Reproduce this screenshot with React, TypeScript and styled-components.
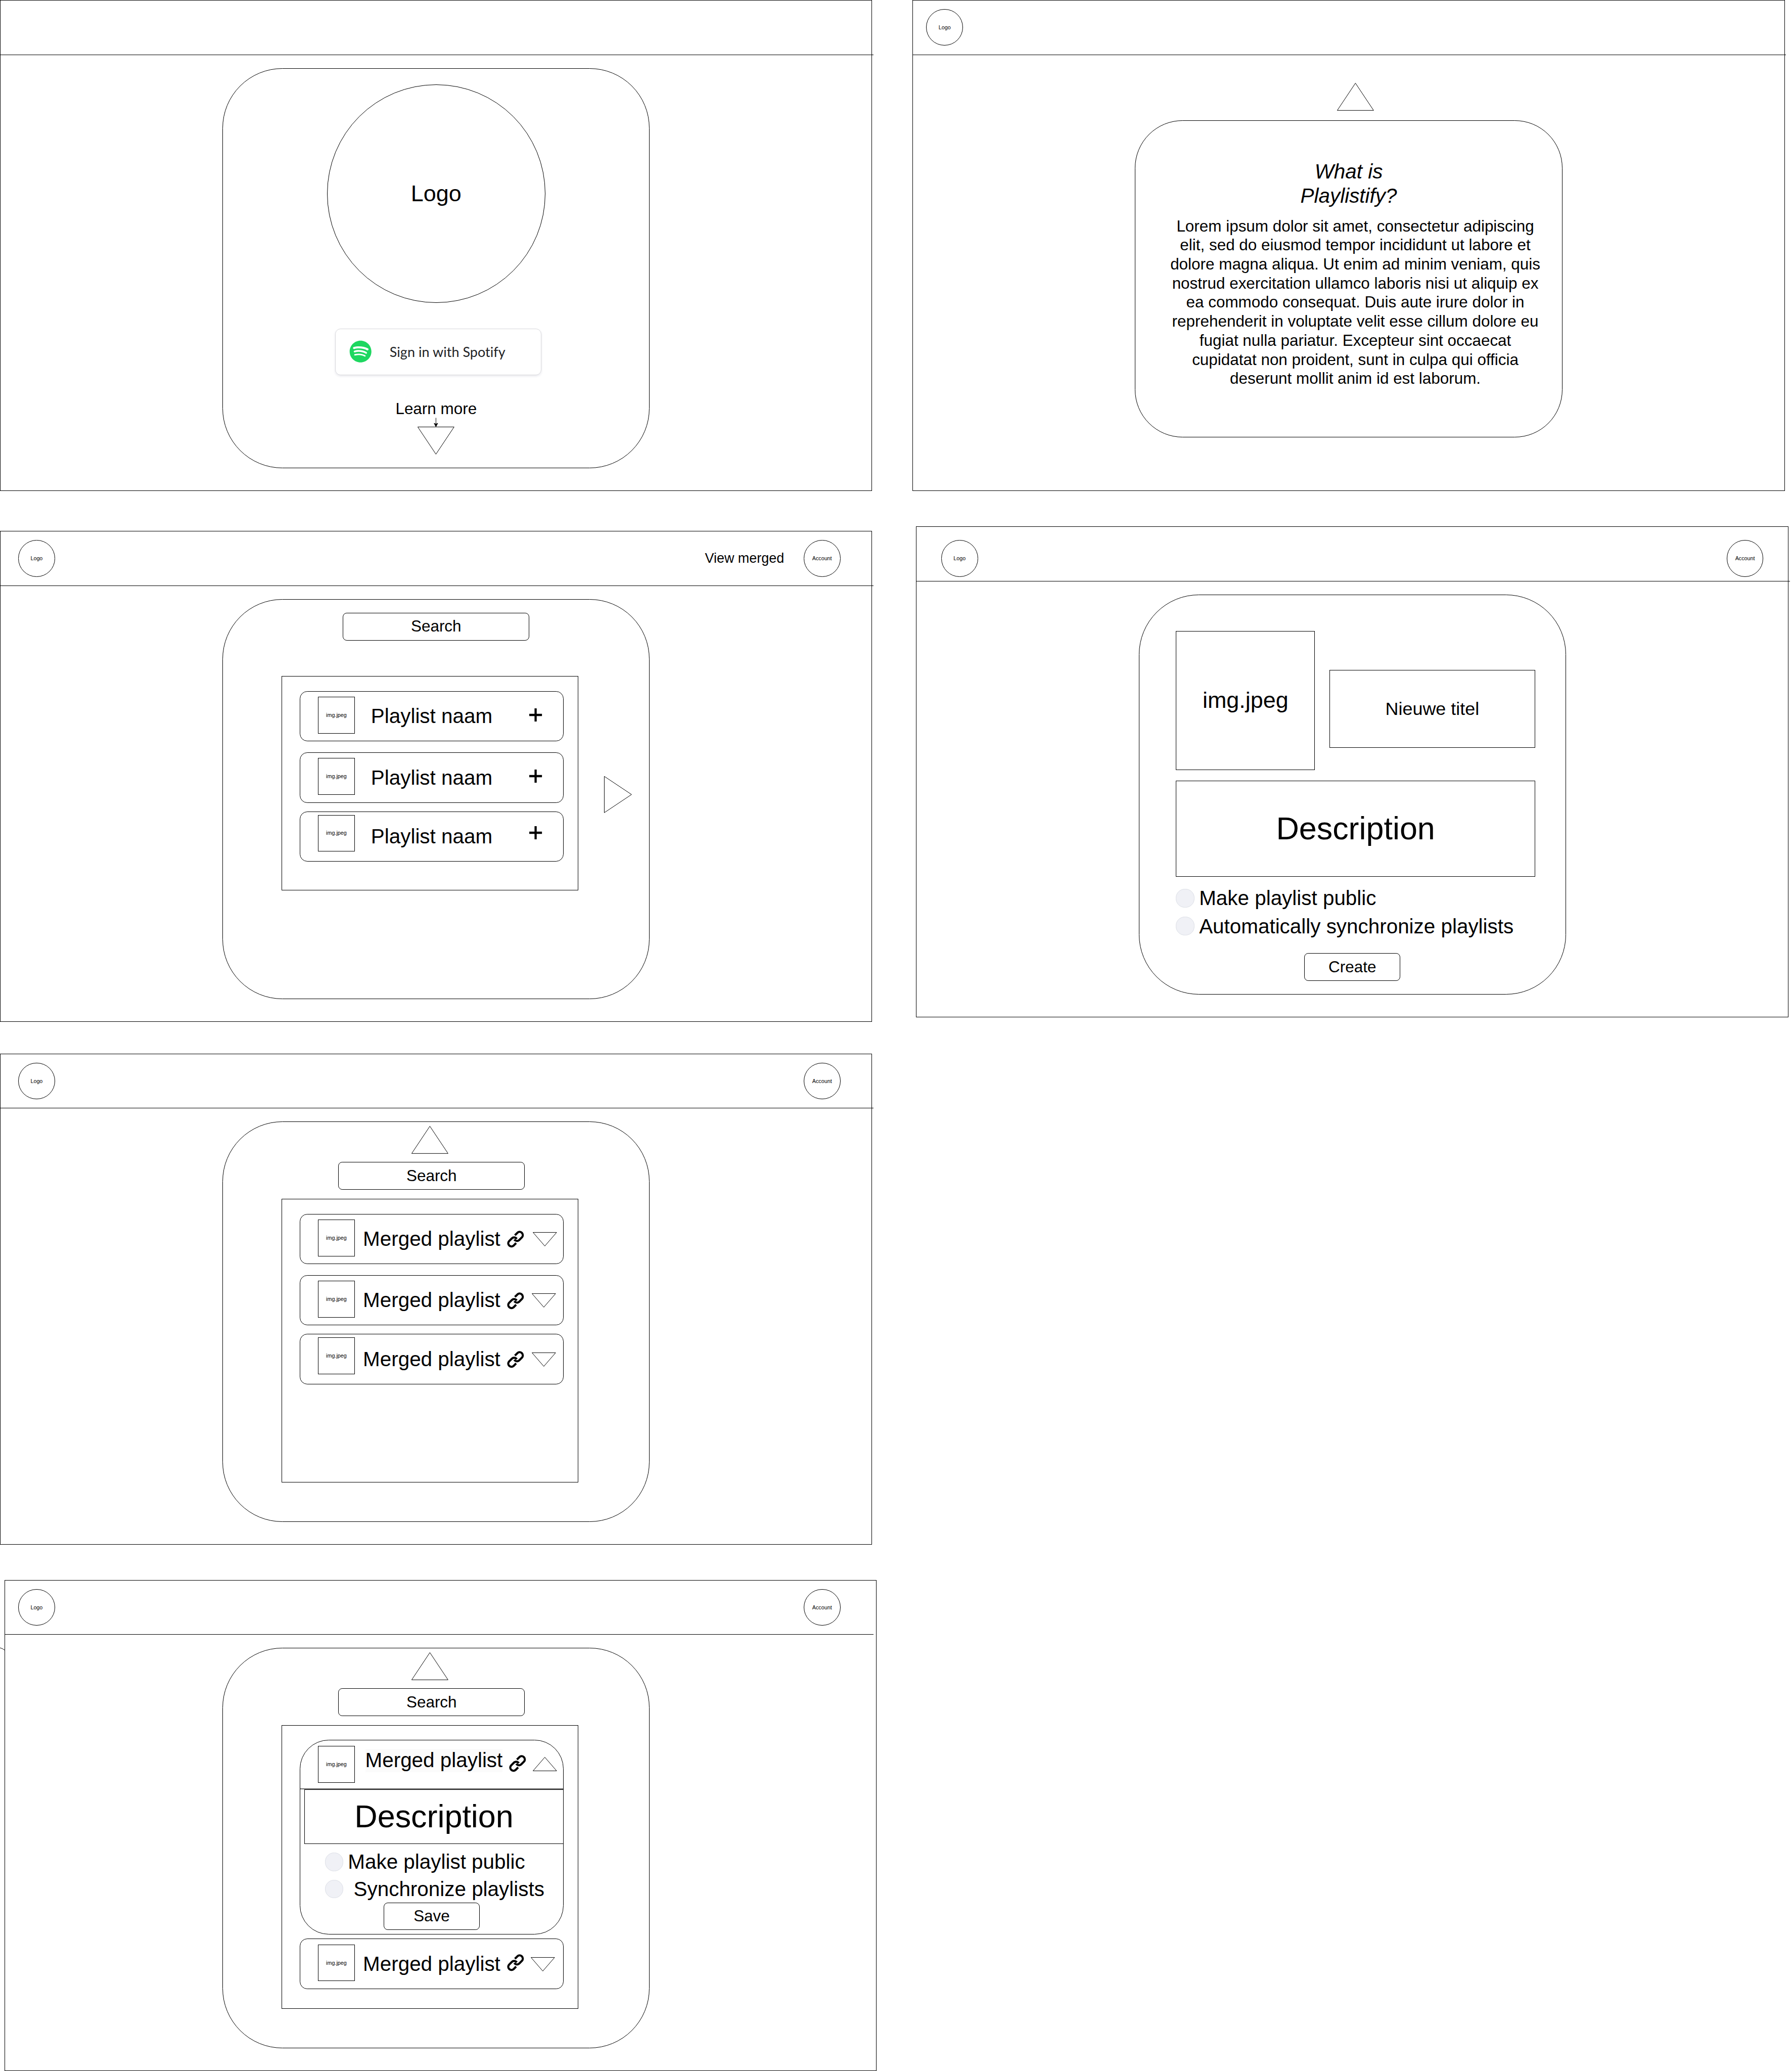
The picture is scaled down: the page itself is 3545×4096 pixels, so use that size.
import React from "react";
import styled, { createGlobalStyle } from "styled-components";
import { FaSpotify } from "react-icons/fa";

/* One rem is ten drawing units, so every length below is written in units. */
const u = (n: number) => `${n / 10}rem`;

const GlobalStyle = createGlobalStyle`
  *, *::before, *::after { box-sizing: border-box; }
  html { font-size: 8.9815px; background: #fff; overflow: hidden; }
  body {
    margin: 0;
    color: #000;
    font-family: "Liberation Sans", Arial, Helvetica, sans-serif;
    line-height: 1.2;
    overflow: hidden;
  }
  h2, p { margin: 0; font-weight: 400; }
`;

const Board = styled.main`
  display: flex;
  align-items: flex-start;
  gap: ${u(89)};
  width: 3545px;
  height: 4096px;
  overflow: hidden;
  background: #fff;
`;

const Column = styled.div`
  display: flex;
  flex-direction: column;
  flex: none;
  width: ${u(1921)};
`;

const line = "1px solid #000";

const Frame = styled.section<{ $top?: number; $left?: number }>`
  display: flex;
  flex-direction: column;
  align-items: flex-start;
  flex: none;
  width: ${u(1921)};
  height: ${u(1081)};
  margin-top: ${(p) => u(p.$top ?? 0)};
  margin-left: ${(p) => u(p.$left ?? 0)};
  border: ${line};
`;

const TopBar = styled.header<{ $width?: number; $pad?: number; $drop?: number }>`
  display: flex;
  align-items: flex-start;
  flex: none;
  width: ${(p) => u(p.$width ?? 1923)};
  height: ${u(120)};
  padding: ${(p) => u(p.$drop ?? 19)} 0 0 ${(p) => u(p.$pad ?? 39)};
  border-bottom: ${line};
`;

const Circle = styled.div<{ $size: number; $font: number; $top?: number; $left?: number }>`
  display: flex;
  align-items: center;
  justify-content: center;
  flex: none;
  width: ${(p) => u(p.$size)};
  height: ${(p) => u(p.$size)};
  margin-top: ${(p) => u(p.$top ?? 0)};
  margin-left: ${(p) => u(p.$left ?? 0)};
  border: ${line};
  border-radius: 50%;
  font-size: ${(p) => u(p.$font)};
`;

const NavLink = styled.span`
  display: flex;
  align-items: center;
  height: ${u(81)};
  margin-left: ${u(1431.5)};
  margin-right: ${u(42.5)};
  font-size: ${u(30)};
  line-height: 1.2;
  white-space: nowrap;
  width: ${u(175)};
`;

const Panel = styled.div<{ $left?: number; $top?: number; $height?: number; $radius?: number; $start?: boolean }>`
  display: flex;
  flex-direction: column;
  align-items: ${(p) => (p.$start ? "flex-start" : "center")};
  flex: none;
  width: ${u(941)};
  height: ${(p) => u(p.$height ?? 881)};
  margin-top: ${(p) => u(p.$top ?? 29)};
  margin-left: ${(p) => u(p.$left ?? 489)};
  border: ${line};
  border-radius: ${(p) => u(p.$radius ?? 132)};
`;

const SpotifyButton = styled.div`
  display: flex;
  align-items: center;
  width: ${u(454)};
  height: ${u(101.5)};
  margin-top: ${u(57)};
  margin-left: ${u(9)};
  padding-left: ${u(30.5)};
  border: 1px solid #d8d8dc;
  border-radius: ${u(12)};
  box-shadow: 0 2px 4px rgba(60, 60, 100, 0.12);
  color: #202124;
  font-family: Lato, "Open Sans", sans-serif;
  font-size: ${u(30)};
  letter-spacing: ${u(0.06)};
  white-space: nowrap;
  svg {
    flex: none;
    width: ${u(49.5)};
    height: ${u(49.5)};
    margin: 0 ${u(39)} ${u(1)} 0;
    color: #1ed760;
  }
`;

const LearnMore = styled.span`
  margin-top: ${u(53.5)};
  font-size: ${u(35)};
`;

const Shape = styled.svg<{ $w: number; $h: number; $top?: number; $left?: number; $right?: number }>`
  display: block;
  flex: none;
  width: ${(p) => u(p.$w)};
  height: ${(p) => u(p.$h)};
  margin-top: ${(p) => u(p.$top ?? 0)};
  margin-left: ${(p) => u(p.$left ?? 0)};
  margin-right: ${(p) => u(p.$right ?? 0)};
  overflow: visible;
  fill: none;
  stroke: #000;
  stroke-width: 1.1;
`;

const Heading = styled.h2`
  margin-top: ${u(84.3)};
  font-size: ${u(45)};
  font-style: italic;
  text-align: center;
  white-space: pre-line;
`;

const Copy = styled.p`
  margin-top: ${u(18.7)};
  padding-left: ${u(29)};
  font-size: ${u(35)};
  text-align: center;
  white-space: pre;
`;

const Button = styled.div<{ $width: number; $top: number; $right?: number }>`
  display: flex;
  align-items: center;
  justify-content: center;
  align-self: center;
  flex: none;
  width: ${(p) => u(p.$width)};
  height: ${u(61)};
  margin-top: ${(p) => u(p.$top)};
  margin-right: ${(p) => u(p.$right ?? 0)};
  border: ${line};
  font-size: ${u(35)};
  border-radius: ${u(9)};
`;

const ListRow = styled.div<{ $top: number }>`
  display: flex;
  align-items: flex-start;
  align-self: stretch;
  margin-top: ${(p) => u(p.$top)};
  padding-left: ${u(129)};
`;

const List = styled.div<{ $height: number }>`
  display: flex;
  flex-direction: column;
  flex: none;
  width: ${u(654)};
  height: ${(p) => u(p.$height)};
  padding: ${u(31.5)} 0 0 ${u(39)};
  border: ${line};
`;

const Card = styled.div<{ $height?: number; $radius?: number; $top?: number }>`
  display: flex;
  flex-direction: column;
  flex: none;
  width: ${u(581)};
  height: ${(p) => u(p.$height ?? 111)};
  margin-top: ${(p) => u(p.$top ?? 0)};
  border: ${line};
  border-radius: ${(p) => u(p.$radius ?? 16.5)};
`;

const CardRow = styled.div<{ $shift?: number; $height?: number }>`
  display: grid;
  grid-template-columns: 1fr auto 1fr;
  align-items: start;
  flex: none;
  height: ${(p) => u(p.$height ?? 109)};
  padding-left: ${(p) => u(p.$shift ?? 0)};
`;

const Thumb = styled.div<{ $left?: number; $top?: number }>`
  display: flex;
  align-items: center;
  justify-content: center;
  width: ${u(81)};
  height: ${u(81)};
  margin-top: ${(p) => u(p.$top ?? 11.5)};
  margin-left: ${(p) => u(p.$left ?? 39)};
  border: ${line};
  font-size: ${u(12)};
`;

const Title = styled.span<{ $raise?: number; $tint?: boolean }>`
  align-self: center;
  margin-bottom: ${(p) => u(p.$raise ?? 0)};
  font-size: ${u(45)};
  line-height: ${(p) => (p.$tint ? u(51) : 1.2)};
  white-space: nowrap;
  background: ${(p) => (p.$tint ? "#fbfbfb" : "transparent")};
`;

const Actions = styled.div<{ $end?: boolean }>`
  display: flex;
  align-items: flex-start;
  justify-content: ${(p) => (p.$end ? "flex-end" : "space-between")};
`;

const Separator = styled.div`
  flex: none;
  height: ${u(2)};
  background: #6a6a6a;
`;

const Field = styled.div<{ $w: number; $h: number; $font: number; $top?: number; $left?: number }>`
  display: flex;
  align-items: center;
  justify-content: center;
  flex: none;
  width: ${(p) => u(p.$w)};
  height: ${(p) => u(p.$h)};
  margin-top: ${(p) => u(p.$top ?? 0)};
  margin-left: ${(p) => u(p.$left ?? 0)};
  border: ${line};
  font-size: ${(p) => u(p.$font)};
`;

const FieldRow = styled.div`
  display: flex;
  align-items: flex-start;
  margin: ${u(79)} 0 0 ${u(81)};
`;

const Option = styled.div<{ $top: number; $left: number; $gap?: number }>`
  display: flex;
  align-items: center;
  gap: ${(p) => u(p.$gap ?? 10)};
  flex: none;
  height: ${u(41)};
  margin-top: ${(p) => u(p.$top)};
  margin-left: ${(p) => u(p.$left)};
  font-size: ${u(45)};
  white-space: nowrap;
`;

const Box = styled.i`
  flex: none;
  width: ${u(41)};
  height: ${u(41)};
  border: 1px solid #dcdfe6;
  background: #f0f1f6;
  border-radius: 48%;
`;

const StrayLine = styled(Shape)`
  position: absolute;
  top: ${u(3629)};
  left: 0;
`;

type TriangleProps = {
  dir: "up" | "down" | "right";
  small?: boolean;
  top?: number;
  left?: number;
  right?: number;
};

const Triangle = ({ dir, small, top, left, right }: TriangleProps) => {
  const w = small ? 53 : dir === "right" ? 61 : 81;
  const h = small ? 31 : dir === "right" ? 81 : 61;
  const r = w - 0.5;
  const b = h - 0.5;
  const points = {
    up: `${w / 2},0.5 ${r},${b} 0.5,${b}`,
    down: `0.5,0.5 ${r},0.5 ${w / 2},${b}`,
    right: `0.5,0.5 ${r},${h / 2} 0.5,${b}`,
  }[dir];
  return (
    <Shape $w={w} $h={h} $top={top} $left={left} $right={right} viewBox={`0 0 ${w} ${h}`}>
      <polygon points={points} />
    </Shape>
  );
};

const ChainLink = ({ top }: { top: number }) => (
  <Shape $w={37.5} $h={37.5} $top={top} $left={14.2} viewBox="0 0 112 112">
    <g strokeWidth={14}>
      <path d="M52 30.3L69.2 13.2A21 21 0 0 1 98.8 42.8L80.2 61.5A21 21 0 0 1 48 58" />
      <path d="M60 81.7L42.8 98.8A21 21 0 0 1 13.2 69.2L31.8 50.5A21 21 0 0 1 64 54" />
    </g>
  </Shape>
);

const Badge = ({ label, left }: { label: string; left?: number }) => (
  <Circle $size={81} $font={12} $left={left}>
    {label}
  </Circle>
);

const PlaylistCard = ({ top, lift = 0 }: { top?: number; lift?: number }) => (
  <Card $top={top}>
    <CardRow>
      <Thumb $top={11.5 - lift}>img.jpeg</Thumb>
      <Title>Playlist naam</Title>
      <Actions $end>
        <Shape $w={28} $h={29} $top={36.5 - lift} $right={46} viewBox="0 0 28 29">
          <path d="M14 0V29M0 14.5H28" strokeWidth={4.8} />
        </Shape>
      </Actions>
    </CardRow>
  </Card>
);

type MergedProps = { top?: number; lift?: number; inset?: number; linkTop?: number };

const MergedCard = ({ top, lift = 0, inset = 16.2, linkTop = 36.5 }: MergedProps) => (
  <Card $top={top}>
    <CardRow>
      <Thumb $top={11.5 - lift}>img.jpeg</Thumb>
      <Title>Merged playlist</Title>
      <Actions>
        <ChainLink top={linkTop} />
        <Triangle dir="down" small top={39.2} right={inset} />
      </Actions>
    </CardRow>
  </Card>
);

const ExpandedCard = () => (
  <Card $height={428} $radius={64}>
    <CardRow $shift={10} $height={105.5}>
      <Thumb $left={29}>img.jpeg</Thumb>
      <Title $raise={17} $tint>
        Merged playlist
      </Title>
      <Actions>
        <ChainLink top={31.8} />
        <Triangle dir="up" small top={36.5} right={13.2} />
      </Actions>
    </CardRow>
    <Separator />
    <Field $w={571} $h={120} $left={9} $font={70}>
      Description
    </Field>
    <Option $top={19} $left={54}>
      <Box />
      Make playlist public
    </Option>
    <Option $top={19} $left={54} $gap={22.5}>
      <Box />
      Synchronize playlists
    </Option>
    <Button $width={211} $top={9}>
      Save
    </Button>
  </Card>
);

const lorem = [
  "Lorem ipsum dolor sit amet, consectetur adipiscing",
  "elit, sed do eiusmod tempor incididunt ut labore et",
  "dolore magna aliqua. Ut enim ad minim veniam, quis",
  "nostrud exercitation ullamco laboris nisi ut aliquip ex",
  "ea commodo consequat. Duis aute irure dolor in",
  "reprehenderit in voluptate velit esse cillum dolore eu",
  "fugiat nulla pariatur. Excepteur sint occaecat",
  "cupidatat non proident, sunt in culpa qui officia",
  "deserunt mollit anim id est laborum.",
].join("\n");

const LandingFrame = () => (
  <Frame>
    <TopBar />
    <Panel>
      <Circle $size={481} $font={50} $top={35}>
        Logo
      </Circle>
      <SpotifyButton>
        <FaSpotify />
        Sign in with Spotify
      </SpotifyButton>
      <LearnMore>Learn more</LearnMore>
      <Shape $w={81} $h={81} $top={-1.5} viewBox="0 0 81 81">
        <path d="M40.5 0.5V18" />
        <path d="M36.5 12.3L40.5 20L44.5 12.3L40.5 14.3Z" fill="#000" />
        <path d="M0.5 20.5H80.5L40.5 80.5Z" />
      </Shape>
    </Panel>
  </Frame>
);

const AboutFrame = () => (
  <Frame>
    <TopBar $pad={29} $drop={18.5}>
      <Badge label="Logo" />
    </TopBar>
    <Triangle dir="up" top={62} left={934} />
    <Panel $top={21} $height={698.5} $radius={105}>
      <Heading>{"What is\nPlaylistify?"}</Heading>
      <Copy>{lorem}</Copy>
    </Panel>
  </Frame>
);

const SearchFrame = () => (
  <Frame $top={88}>
    <TopBar>
      <Badge label="Logo" />
      <NavLink>View merged</NavLink>
      <Badge label="Account" />
    </TopBar>
    <Panel>
      <Button $width={411} $top={29}>
        Search
      </Button>
      <ListRow $top={79}>
        <List $height={471}>
          <PlaylistCard />
          <PlaylistCard top={24} />
          <PlaylistCard top={19} lift={5} />
        </List>
        <Triangle dir="right" top={220} left={56} />
      </ListRow>
    </Panel>
  </Frame>
);

const CreateFrame = () => (
  <Frame $top={78} $left={8}>
    <TopBar $pad={54} $drop={29}>
      <Badge label="Logo" />
      <Badge label="Account" left={1649} />
    </TopBar>
    <Panel $start>
      <FieldRow>
        <Field $w={306} $h={306} $font={50}>
          img.jpeg
        </Field>
        <Field $w={453} $h={171} $font={40} $left={32} $top={86}>
          Nieuwe titel
        </Field>
      </FieldRow>
      <Field $w={791} $h={211} $font={70} $top={24} $left={81}>
        Description
      </Field>
      <Option $top={27} $left={81}>
        <Box />
        Make playlist public
      </Option>
      <Option $top={21} $left={81}>
        <Box />
        Automatically synchronize playlists
      </Option>
      <Button $width={211} $top={39}>
        Create
      </Button>
    </Panel>
  </Frame>
);

const MergedFrame = () => (
  <Frame $top={70}>
    <TopBar>
      <Badge label="Logo" />
      <Badge label="Account" left={1649} />
    </TopBar>
    <Panel>
      <Triangle dir="up" top={8} right={26.5} />
      <Button $width={411} $top={19} $right={20}>
        Search
      </Button>
      <ListRow $top={20}>
        <List $height={624}>
          <MergedCard inset={13.2} />
          <MergedCard top={24} />
          <MergedCard top={19} lift={5} />
        </List>
      </ListRow>
    </Panel>
  </Frame>
);

const EditFrame = () => (
  <Frame $top={78} $left={10}>
    <TopBar $width={1913} $pad={29}>
      <Badge label="Logo" />
      <Badge label="Account" left={1649} />
    </TopBar>
    <Panel $left={479}>
      <Triangle dir="up" top={8} right={26.5} />
      <Button $width={411} $top={19} $right={20}>
        Search
      </Button>
      <ListRow $top={20}>
        <List $height={624}>
          <ExpandedCard />
          <MergedCard top={9.5} inset={18.5} linkTop={33.5} />
        </List>
      </ListRow>
    </Panel>
  </Frame>
);

export default function App() {
  return (
    <>
      <GlobalStyle />
      <Board>
        <Column>
          <LandingFrame />
          <SearchFrame />
          <MergedFrame />
          <EditFrame />
        </Column>
        <Column>
          <AboutFrame />
          <CreateFrame />
        </Column>
        <StrayLine $w={10} $h={5} viewBox="0 0 10 5">
          <path d="M0 0Q6 1.5 10 5" />
        </StrayLine>
      </Board>
    </>
  );
}
